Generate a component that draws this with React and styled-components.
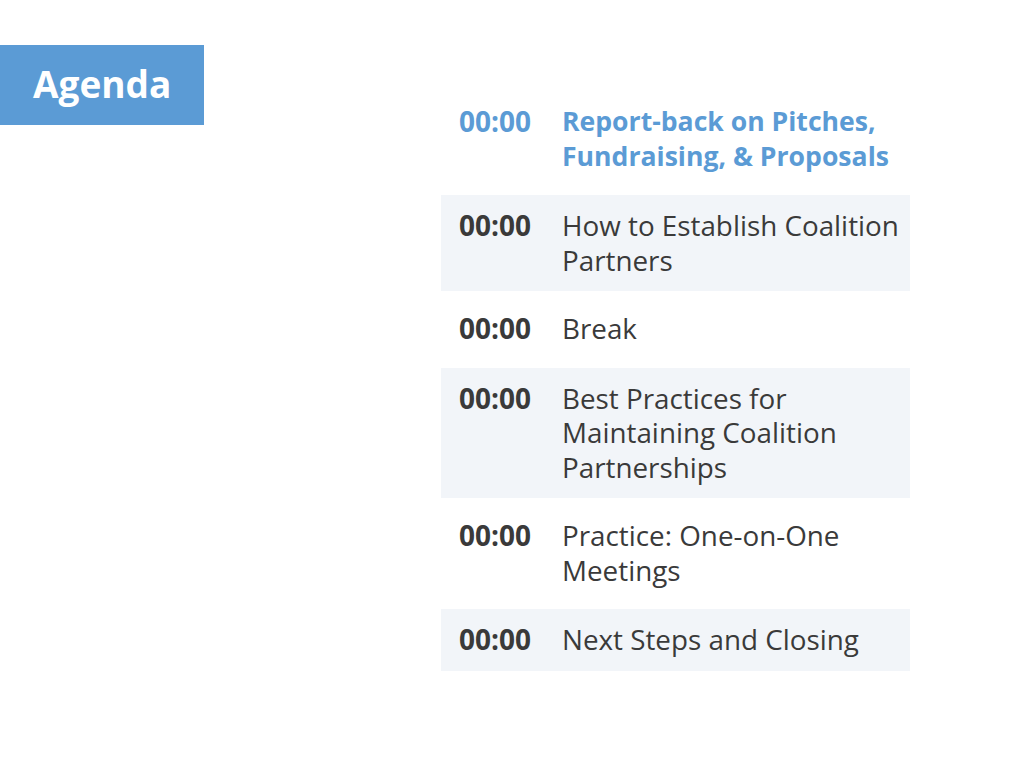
import React from "react";
import styled, { createGlobalStyle } from "styled-components";

const Global = createGlobalStyle`
  html, body { margin: 0; padding: 0; background: #ffffff; }
  body { font-family: "Open Sans", "Liberation Sans", sans-serif; }
`;

const Slide = styled.div`
  width: 1024px;
  height: 768px;
  display: grid;
  grid-template-columns: 441px 469px;
  background: #ffffff;
  overflow: hidden;
`;

const Left = styled.div`
  padding-top: 45px;
`;

const TitleBox = styled.div`
  width: 204px;
  height: 80px;
  background: #5b9bd5;
  display: flex;
  align-items: center;
  box-sizing: border-box;
  padding-left: 33px;
  padding-bottom: 3px;
`;

const Title = styled.h1`
  margin: 0;
  color: #ffffff;
  font-weight: 700;
  font-size: 37px;
  line-height: 44px;
`;

const List = styled.div`
  padding-top: 84px;
  display: flex;
  flex-direction: column;
`;

const Row = styled.div`
  display: grid;
  grid-template-columns: 103px 1fr;
  padding: ${(p) => (p.$shaded ? "13px 0 14px 18px" : "20px 0 20px 18px")};
  margin-top: ${(p) => (p.$shaded ? "2px" : "0")};
  background: ${(p) => (p.$shaded ? "#f2f5f9" : "transparent")};
  color: ${(p) => (p.$accent ? "#5b9bd5" : "#3a3a3a")};
  font-size: 28px;
  line-height: 34.5px;
`;

const Time = styled.div`
  font-weight: 700;
  font-size: 28px;
`;

const Topic = styled.div`
  font-weight: ${(p) => (p.$accent ? 700 : 400)};
  font-size: ${(p) => (p.$accent ? "26.6px" : "27.8px")};
  white-space: nowrap;
`;

const items = [
  { time: "00:00", lines: ["Report-back on Pitches,", "Fundraising, & Proposals"], accent: true },
  { time: "00:00", lines: ["How to Establish Coalition", "Partners"], shaded: true },
  { time: "00:00", lines: ["Break"] },
  { time: "00:00", lines: ["Best Practices for", "Maintaining Coalition", "Partnerships"], shaded: true },
  { time: "00:00", lines: ["Practice: One-on-One", "Meetings"] },
  { time: "00:00", lines: ["Next Steps and Closing"], shaded: true },
];

export default function App() {
  return (
    <>
      <Global />
      <Slide>
        <Left>
          <TitleBox>
            <Title>Agenda</Title>
          </TitleBox>
        </Left>
        <List>
          {items.map((it, i) => (
            <Row key={i} $shaded={it.shaded} $accent={it.accent}>
              <Time>{it.time}</Time>
              <Topic $accent={it.accent}>
                {it.lines.map((l, j) => (
                  <div key={j}>{l}</div>
                ))}
              </Topic>
            </Row>
          ))}
        </List>
      </Slide>
    </>
  );
}
